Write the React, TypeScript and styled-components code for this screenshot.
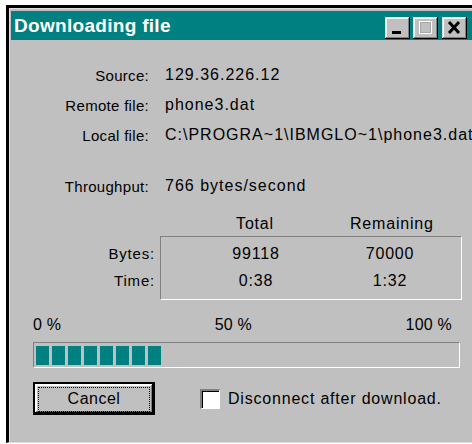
import React from "react";
import styled, { createGlobalStyle, css } from "styled-components";

// classic 3D bevels
const raised = css`
  background: #c0c0c0;
  box-shadow: inset -1px -1px #000, inset 1px 1px #dfdfdf,
    inset -2px -2px #808080, inset 2px 2px #fff;
`;

const sunken = css`
  border-top: 1px solid #808080;
  border-left: 1px solid #808080;
  border-bottom: 1px solid #fff;
  border-right: 1px solid #fff;
`;

const GlobalStyle = createGlobalStyle`
  html, body {
    margin: 0;
    padding: 0;
    background: #fff;
    overflow: hidden;
  }
  body {
    font-family: "Liberation Sans", Arial, sans-serif;
    color: #000;
  }
`;

const Window = styled.div`
  margin: 5px 0 0 6px;
  width: 480px;
  height: 438px;
  border-top: 3px solid #000;
  border-left: 3px solid #000;
  border-bottom: 1px solid #dcdcdc;
  background: #c0c0c0;
  box-shadow: inset 1px 1px #dfdfdf;
  padding: 3px 0 0 2px;
  box-sizing: border-box;
`;

const TitleBar = styled.div`
  height: 29px;
  background: #008080;
  display: flex;
  align-items: center;
  padding: 0 19px 0 3px;
`;

const Title = styled.div`
  flex: 1;
  color: #fff;
  font-weight: bold;
  font-size: 19px;
  letter-spacing: 0.3px;
`;

const TitleButtons = styled.div`
  display: flex;
  align-items: center;
  margin-top: 5px;
`;

const TitleButton = styled.div<{ $gap?: number }>`
  ${raised};
  width: 25px;
  height: 22px;
  margin-left: ${(p) => p.$gap ?? 0}px;
  display: flex;
  align-items: center;
  justify-content: center;
`;

const Body = styled.div`
  padding: 0 12px 0 22px;
  font-size: 16px;
  letter-spacing: 0.8px;
`;

const InfoGrid = styled.div`
  display: grid;
  grid-template-columns: 116px 1fr;
  grid-template-rows: 30px 30px 30px 21px 30px;
  column-gap: 16px;
  align-items: center;
  margin-top: 20px;
  white-space: nowrap;
`;

const Spacer = styled.div`
  grid-column: 1 / -1;
`;

const Label = styled.div`
  text-align: right;
  font-size: 15px;
  letter-spacing: 0.3px;
`;

const Value = styled.div`
  letter-spacing: 1px;
  overflow: hidden;
`;

const StatsHead = styled.div`
  display: grid;
  grid-template-columns: 127px 190px 78px;
  margin-top: 9px;
  height: 24px;
  align-items: center;
`;

const StatsRow = styled.div`
  display: flex;
  margin-top: 2px;
`;

const StatsLabels = styled.div`
  width: 122px;
  margin-right: 5px;
  display: flex;
  flex-direction: column;
  padding-top: 4px;
`;

const StatsLabel = styled.div`
  height: 27px;
  line-height: 27px;
  text-align: right;
  font-size: 15px;
`;

const StatsBox = styled.div`
  ${sunken};
  width: 300px;
  height: 59px;
  display: grid;
  grid-template-columns: 190px 78px;
  grid-auto-rows: 27px;
  align-content: start;
  padding-top: 3px;
  box-sizing: content-box;
`;

const Cell = styled.div`
  text-align: center;
  line-height: 27px;
`;

const Scale = styled.div`
  display: flex;
  justify-content: space-between;
  margin-top: 14px;
  width: 419px;
  height: 22px;
  align-items: center;
  letter-spacing: 0.2px;
`;

const ProgressTrack = styled.div`
  ${sunken};
  width: 423px;
  height: 24px;
  margin-top: 6px;
  display: flex;
  align-items: center;
  gap: 3px;
  padding-left: 2px;
`;

const Block = styled.div`
  width: 13px;
  height: 19px;
  background: #008080;
`;

const Footer = styled.div`
  display: flex;
  align-items: center;
  margin-top: 14px;
`;

const Button = styled.button`
  ${raised};
  box-shadow: inset -1px -1px #000, inset 1px 1px #000, inset -2px -2px #000,
    inset 2px 2px #fff, inset -3px -3px #808080, inset 3px 3px #fff;
  border: 1px solid #000;
  width: 122px;
  height: 33px;
  padding: 4px;
  font-family: inherit;
  font-size: 16px;
  letter-spacing: 0.5px;
  color: #000;
  box-sizing: border-box;
`;

const Focus = styled.span`
  display: block;
  height: 100%;
  border: 1px dotted #000;
  line-height: 21px;
`;

const Check = styled.label`
  display: flex;
  align-items: center;
  margin-left: 45px;
  gap: 8px;
`;

const CheckBox = styled.span`
  width: 17px;
  height: 17px;
  background: #fff;
  border-top: 2px solid #808080;
  border-left: 2px solid #808080;
  border-bottom: 1px solid #fff;
  border-right: 1px solid #fff;
  box-shadow: inset 1px 1px #000;
`;

const Minimize = () => (
  <svg width="25" height="22" viewBox="0 0 25 22">
    <rect x="7" y="14" width="9" height="3" fill="#000" />
  </svg>
);

const Maximize = () => (
  <svg width="25" height="22" viewBox="0 0 25 22">
    <rect x="6.5" y="4.5" width="12" height="12" fill="none" stroke="#fff" />
    <rect x="7.5" y="5.5" width="10" height="10" fill="none" stroke="#a8a8a8" />
  </svg>
);

const Close = () => (
  <svg width="25" height="22" viewBox="0 0 25 22">
    <path d="M7 5 L17 16 M17 5 L7 16" stroke="#000" strokeWidth="3" />
  </svg>
);

const info = [
  ["Source:", "129.36.226.12"],
  ["Remote file:", "phone3.dat"],
  ["Local file:", "C:\\PROGRA~1\\IBMGLO~1\\phone3.dat"],
];

export default function App() {
  const blocks = 8;
  return (
    <>
      <GlobalStyle />
      <Window>
        <TitleBar>
          <Title>Downloading file</Title>
          <TitleButtons>
            <TitleButton>
              <Minimize />
            </TitleButton>
            <TitleButton $gap={3}>
              <Maximize />
            </TitleButton>
            <TitleButton $gap={4}>
              <Close />
            </TitleButton>
          </TitleButtons>
        </TitleBar>
        <Body>
          <InfoGrid>
            {info.map(([k, v]) => (
              <React.Fragment key={k}>
                <Label>{k}</Label>
                <Value>{v}</Value>
              </React.Fragment>
            ))}
            <Spacer />
            <Label>Throughput:</Label>
            <Value>766 bytes/second</Value>
          </InfoGrid>

          <StatsHead>
            <span />
            <Cell>Total</Cell>
            <Cell>Remaining</Cell>
          </StatsHead>
          <StatsRow>
            <StatsLabels>
              <StatsLabel>Bytes:</StatsLabel>
              <StatsLabel>Time:</StatsLabel>
            </StatsLabels>
            <StatsBox>
              <Cell>99118</Cell>
              <Cell>70000</Cell>
              <Cell>0:38</Cell>
              <Cell>1:32</Cell>
            </StatsBox>
          </StatsRow>

          <Scale>
            <span>0 %</span>
            <span>50 %</span>
            <span>100 %</span>
          </Scale>
          <ProgressTrack>
            {Array.from({ length: blocks }, (_, i) => (
              <Block key={i} />
            ))}
          </ProgressTrack>

          <Footer>
            <Button>
              <Focus>Cancel</Focus>
            </Button>
            <Check>
              <CheckBox />
              Disconnect after download.
            </Check>
          </Footer>
        </Body>
      </Window>
    </>
  );
}
